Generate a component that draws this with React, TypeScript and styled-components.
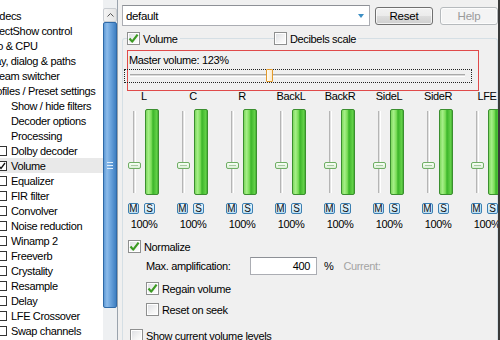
import React from "react";
import styled, { createGlobalStyle } from "styled-components";

const GlobalStyle = createGlobalStyle`
  html, body { margin: 0; padding: 0; background: #f0f0f0; }
  body {
    font-family: "Liberation Sans", Arial, sans-serif;
    font-size: 11px;
    color: #000;
  }
`;

const Window = styled.div`
  width: 500px;
  height: 340px;
  display: flex;
  overflow: hidden;
  background: #f0f0f0;
  letter-spacing: -0.35px;
`;

/* ---------- left tree ---------- */

const TreePanel = styled.div`
  width: 118px;
  flex: none;
  display: flex;
  background: #fff;
  border-right: 1px solid #9aa3ad;
  box-sizing: border-box;
`;

const TreeList = styled.div`
  flex: 1;
  min-width: 0;
  overflow: hidden;
  padding-top: 8px;
`;

const TreeRow = styled.div<{ $selected?: boolean }>`
  height: 15px;
  display: flex;
  align-items: center;
  gap: 4px;
  white-space: nowrap;
  background: ${(p) => (p.$selected ? "#e9e9e9" : "transparent")};
`;

const TreeText = styled.span<{ $indent: number }>`
  margin-left: ${(p) => p.$indent}px;
`;

const TreeBox = styled.span`
  width: 10px;
  height: 10px;
  flex: none;
  margin-left: -3px;
  border: 1px solid #333;
  box-sizing: border-box;
  background: #fff;
  display: flex;
  align-items: center;
  justify-content: center;
`;

const Scrollbar = styled.div`
  width: 14px;
  flex: none;
  display: flex;
  flex-direction: column;
  padding-top: 8px;
  background: #eef0f2;
`;

const ScrollArrow = styled.div`
  height: 14px;
  box-sizing: border-box;
  border: 1px solid #c9cdd2;
  border-radius: 2px;
  background: linear-gradient(to right, #f4f4f4, #e4e4e4);
  display: flex;
  align-items: center;
  justify-content: center;
`;

const ScrollThumb = styled.div`
  height: 286px;
  box-sizing: border-box;
  border: 1px solid #2f6aa8;
  border-radius: 2px;
  background: linear-gradient(
    to right,
    #5f9ad6 0%,
    #8cbbea 25%,
    #6aa3dc 55%,
    #3f7fc2 100%
  );
  display: flex;
  flex-direction: column;
  align-items: center;
  justify-content: center;
  gap: 2px;
`;

const Grip = styled.span`
  width: 6px;
  height: 1px;
  background: #dfeefc;
`;

/* ---------- right side ---------- */

const RightPane = styled.div`
  flex: 1;
  min-width: 0;
  display: flex;
  flex-direction: column;
  padding-left: 4px;
  border-right: 2px solid #3a3a3a;
  overflow: hidden;
`;

const Toolbar = styled.div`
  display: flex;
  align-items: center;
  margin-top: 5px;
  height: 21px;
  flex: none;
`;

const Combo = styled.div`
  width: 250px;
  height: 21px;
  box-sizing: border-box;
  border: 1px solid #abadb3;
  border-top-color: #8d9096;
  background: #fff;
  display: flex;
  align-items: center;
  padding: 0 3px 0 3px;
  font-size: 11.5px;
`;

const ComboText = styled.span`
  flex: 1;
`;

const ComboArrow = styled.span`
  width: 0;
  height: 0;
  border-left: 3.5px solid transparent;
  border-right: 3.5px solid transparent;
  border-top: 4px solid #3d8fc4;
  margin-right: 2px;
`;

const PushButton = styled.button<{ $disabled?: boolean; $gap: number }>`
  width: 58px;
  height: 18px;
  flex: none;
  margin-left: ${(p) => p.$gap}px;
  padding: 0;
  font: inherit;
  font-size: 11.5px;
  letter-spacing: -0.2px;
  border-radius: 3px;
  border: 1px solid ${(p) => (p.$disabled ? "#b6babd" : "#707070")};
  color: ${(p) => (p.$disabled ? "#9a9a9a" : "#000")};
  background: ${(p) =>
    p.$disabled
      ? "#f4f4f4"
      : "linear-gradient(#f2f2f2 0%, #ebebeb 50%, #dddddd 51%, #cfcfcf 100%)"};
  box-shadow: inset 0 0 0 1px rgba(255, 255, 255, 0.7);
`;

const GroupBox = styled.div`
  margin-top: 12px;
  border: 1px solid #d5dfe5;
  border-bottom: none;
  border-radius: 3px 3px 0 0;
  flex: 1;
  display: flex;
  flex-direction: column;
`;

const GroupHeader = styled.div`
  display: grid;
  grid-template-columns: 147px auto;
  justify-items: start;
  margin-top: -7px;
  padding-left: 4px;
  height: 13px;
`;

const HeaderItem = styled.div`
  background: #f0f0f0;
  padding-right: 2px;
`;

const CheckLabel = styled.label<{ $indent?: number }>`
  display: flex;
  align-items: center;
  gap: 3px;
  height: 13px;
  padding-left: ${(p) => p.$indent ?? 0}px;
  white-space: nowrap;
`;

const CheckBox = styled.span`
  width: 13px;
  height: 13px;
  flex: none;
  box-sizing: border-box;
  border: 1px solid #8e8f8f;
  background: linear-gradient(135deg, #dcdee2 0%, #f4f4f4 60%, #ffffff 100%);
  box-shadow: inset 0 0 0 1px #fff;
  display: flex;
  align-items: center;
  justify-content: center;
`;

const MasterBox = styled.div`
  margin: 5px 0 0 4px;
  width: 352px;
  height: 41px;
  box-sizing: border-box;
  border: 1px solid #e04a4a;
  padding: 3px 1px 0;
  display: flex;
  flex-direction: column;
`;

const MasterLabel = styled.div`
  line-height: 13px;
`;

const HSlider = styled.div`
  position: relative;
  margin: 2px 0 0 -5px;
  width: 348px;
  height: 14px;
  box-sizing: border-box;
  border: 1px dotted #222;
`;

const HTrack = styled.div`
  margin: 4px 6px 0 5px;
  height: 3px;
  box-sizing: border-box;
  border-top: 1px solid #a9a9a9;
  border-bottom: 1px solid #fff;
  background: #dadada;
`;

const HThumb = styled.div`
  position: absolute;
  left: 141px;
  top: -1px;
  width: 7px;
  height: 13px;
  box-sizing: border-box;
  border: 1px solid #e39a2b;
  border-radius: 1px;
  background: linear-gradient(to right, #fffdf5, #fbeacb);
`;

const ChannelGrid = styled.div`
  display: flex;
  padding-left: 3px;
`;

const Channel = styled.div`
  width: 47px;
  flex: none;
  display: flex;
  flex-direction: column;
  padding-left: 2px;
`;

const ChanText = styled.div<{ $top: number }>`
  width: 32px;
  margin-top: ${(p) => p.$top}px;
  line-height: 13px;
  text-align: center;
  white-space: nowrap;
`;

const MeterRow = styled.div`
  display: flex;
  gap: 4px;
  height: 86px;
  margin-top: 6px;
`;

const VSlider = styled.div`
  position: relative;
  width: 13px;
  display: flex;
  justify-content: center;
  padding-top: 2px;
  box-sizing: border-box;
`;

const VTrack = styled.div`
  width: 3px;
  height: 82px;
  box-sizing: border-box;
  border-left: 1px solid #b5b5b5;
  border-right: 1px solid #fff;
  background: #e2e2e2;
`;

const VThumb = styled.div`
  position: absolute;
  left: 0;
  top: 53px;
  width: 13px;
  height: 7px;
  box-sizing: border-box;
  border: 1px solid #6fae64;
  border-radius: 2px;
  background: linear-gradient(#f8fff6, #dcefd8);
  display: flex;
  align-items: center;
  justify-content: center;
`;

const ThumbLine = styled.span`
  width: 7px;
  height: 1px;
  background: #a9c9a3;
`;

const LevelBar = styled.div`
  width: 14px;
  height: 86px;
  box-sizing: border-box;
  border: 1px solid #3b8f2f;
  border-radius: 2px;
  background: linear-gradient(
    to right,
    #7fd95f 0%,
    #a6ef88 22%,
    #78dc56 45%,
    #3bb52a 58%,
    #4fc238 72%,
    #62d048 88%,
    #46b134 100%
  );
`;

const SmallButtons = styled.div`
  display: flex;
  gap: 5px;
  margin-top: 8px;
`;

const SmallButton = styled.span`
  width: 11px;
  height: 11px;
  box-sizing: border-box;
  border: 1px solid #3c7fb1;
  border-radius: 2px;
  background: linear-gradient(#eaf6fd, #bfe1f5);
  font-size: 10px;
  line-height: 9px;
  text-align: center;
  letter-spacing: 0;
  color: #111;
`;

const Options = styled.div`
  display: flex;
  flex-direction: column;
  padding-left: 5px;
`;

const Spaced = styled.div<{ $top: number }>`
  margin-top: ${(p) => p.$top}px;
`;

const AmpRow = styled.div`
  display: flex;
  align-items: center;
  height: 18px;
  margin-top: 4px;
  padding-left: 18px;
  white-space: nowrap;
`;

const AmpLabel = styled.span`
  width: 104px;
  flex: none;
`;

const AmpInput = styled.div`
  width: 67px;
  height: 18px;
  box-sizing: border-box;
  border: 1px solid #abadb3;
  border-top-color: #8d9096;
  background: #fff;
  text-align: right;
  padding-right: 6px;
  line-height: 16px;
`;

const Unit = styled.span`
  margin-left: 7px;
`;

const Muted = styled.span`
  margin-left: 10px;
  color: #a3a3a3;
`;

/* ---------- drawings ---------- */

const GreenCheck = () => (
  <svg width="11" height="11" viewBox="0 0 11 11">
    <path
      d="M1.5 5.5 L4.2 8.6 L9.6 1.6"
      fill="none"
      stroke="#3c9a23"
      strokeWidth="2.2"
      strokeLinejoin="round"
    />
  </svg>
);

const DarkCheck = () => (
  <svg width="8" height="8" viewBox="0 0 8 8">
    <path d="M1 4 L3 6.5 L7 1" fill="none" stroke="#111" strokeWidth="1.3" />
  </svg>
);

const Chevron = () => (
  <svg width="7" height="4" viewBox="0 0 7 4">
    <path d="M0.5 3.5 L3.5 0.5 L6.5 3.5" fill="none" stroke="#555" strokeWidth="1" />
  </svg>
);

/* ---------- data ---------- */

type TreeItem = { label: string; level: 0 | 1; check?: boolean; selected?: boolean };

const treeItems: TreeItem[] = [
  { label: "Codecs", level: 0 },
  { label: "DirectShow control", level: 0 },
  { label: "Info & CPU", level: 0 },
  { label: "Tray, dialog & paths", level: 0 },
  { label: "Stream switcher", level: 0 },
  { label: "Profiles / Preset settings", level: 0 },
  { label: "Show / hide filters", level: 1 },
  { label: "Decoder options", level: 1 },
  { label: "Processing", level: 1 },
  { label: "Dolby decoder", level: 1, check: false },
  { label: "Volume", level: 1, check: true, selected: true },
  { label: "Equalizer", level: 1, check: false },
  { label: "FIR filter", level: 1, check: false },
  { label: "Convolver", level: 1, check: false },
  { label: "Noise reduction", level: 1, check: false },
  { label: "Winamp 2", level: 1, check: false },
  { label: "Freeverb", level: 1, check: false },
  { label: "Crystality", level: 1, check: false },
  { label: "Resample", level: 1, check: false },
  { label: "Delay", level: 1, check: false },
  { label: "LFE Crossover", level: 1, check: false },
  { label: "Swap channels", level: 1, check: false },
];

const channels = ["L", "C", "R", "BackL", "BackR", "SideL", "SideR", "LFE"];

const Check = ({ checked, label, indent }: { checked?: boolean; label: string; indent?: number }) => (
  <CheckLabel $indent={indent}>
    <CheckBox>{checked && <GreenCheck />}</CheckBox>
    <span>{label}</span>
  </CheckLabel>
);

const App: React.FC = () => {
  return (
    <>
      <GlobalStyle />
      <Window>
        <TreePanel>
          <TreeList>
            {treeItems.map((item) => (
              <TreeRow key={item.label} $selected={item.selected}>
                {item.check !== undefined && (
                  <TreeBox>{item.check && <DarkCheck />}</TreeBox>
                )}
                <TreeText
                  $indent={item.level === 0 ? -14 : item.check !== undefined ? 0 : 11}
                >
                  {item.label}
                </TreeText>
              </TreeRow>
            ))}
          </TreeList>
          <Scrollbar>
            <ScrollArrow>
              <Chevron />
            </ScrollArrow>
            <ScrollThumb>
              <Grip />
              <Grip />
              <Grip />
            </ScrollThumb>
          </Scrollbar>
        </TreePanel>

        <RightPane>
          <Toolbar>
            <Combo>
              <ComboText>default</ComboText>
              <ComboArrow />
            </Combo>
            <PushButton $gap={5}>Reset</PushButton>
            <PushButton $gap={7} $disabled>
              Help
            </PushButton>
          </Toolbar>

          <GroupBox>
            <GroupHeader>
              <HeaderItem>
                <Check checked label="Volume" />
              </HeaderItem>
              <HeaderItem>
                <Check label="Decibels scale" />
              </HeaderItem>
            </GroupHeader>

            <MasterBox>
              <MasterLabel>Master volume: 123%</MasterLabel>
              <HSlider>
                <HTrack />
                <HThumb />
              </HSlider>
            </MasterBox>

            <ChannelGrid>
              {channels.map((ch) => (
                <Channel key={ch}>
                  <ChanText $top={-1}>{ch}</ChanText>
                  <MeterRow>
                    <VSlider>
                      <VTrack />
                      <VThumb>
                        <ThumbLine />
                      </VThumb>
                    </VSlider>
                    <LevelBar />
                  </MeterRow>
                  <SmallButtons>
                    <SmallButton>M</SmallButton>
                    <SmallButton>S</SmallButton>
                  </SmallButtons>
                  <ChanText $top={4}>100%</ChanText>
                </Channel>
              ))}
            </ChannelGrid>

            <Options>
              <Spaced $top={9}>
                <Check checked label="Normalize" />
              </Spaced>
              <AmpRow>
                <AmpLabel>Max. amplification:</AmpLabel>
                <AmpInput>400</AmpInput>
                <Unit>%</Unit>
                <Muted>Current:</Muted>
              </AmpRow>
              <Spaced $top={7}>
                <Check checked label="Regain volume" indent={18} />
              </Spaced>
              <Spaced $top={8}>
                <Check label="Reset on seek" indent={18} />
              </Spaced>
              <Spaced $top={13}>
                <Check label="Show current volume levels" indent={2} />
              </Spaced>
            </Options>
          </GroupBox>
        </RightPane>
      </Window>
    </>
  );
};

export default App;
